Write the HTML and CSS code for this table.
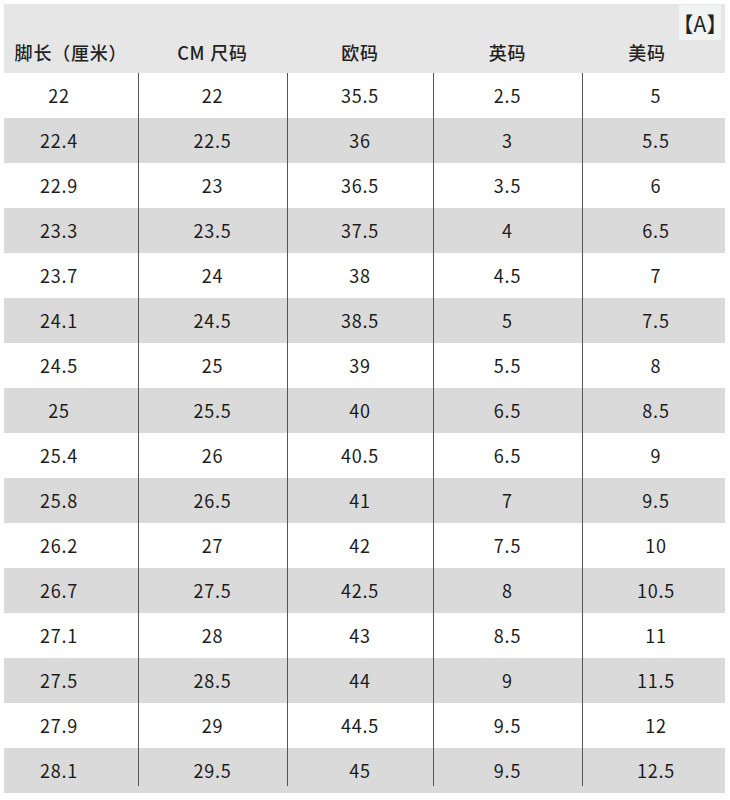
FILE: index.html
```html
<!DOCTYPE html>
<html lang="zh">
<head>
<meta charset="utf-8">
<title>尺码表</title>
<link rel="stylesheet" href="styles.css">
</head>
<body>
<div class="sheet">
  <span class="badge"><span class="badge-text">【A】</span></span>
  <table class="size-table">
    <colgroup>
      <col class="c1"><col class="c2"><col class="c3"><col class="c4"><col class="c5">
    </colgroup>
    <thead>
      <tr><th>脚长（厘米）</th><th>CM 尺码</th><th>欧码</th><th>英码</th><th>美码</th></tr>
    </thead>
    <tbody>
      <tr><td>22</td><td>22</td><td>35.5</td><td>2.5</td><td>5</td></tr>
      <tr><td>22.4</td><td>22.5</td><td>36</td><td>3</td><td>5.5</td></tr>
      <tr><td>22.9</td><td>23</td><td>36.5</td><td>3.5</td><td>6</td></tr>
      <tr><td>23.3</td><td>23.5</td><td>37.5</td><td>4</td><td>6.5</td></tr>
      <tr><td>23.7</td><td>24</td><td>38</td><td>4.5</td><td>7</td></tr>
      <tr><td>24.1</td><td>24.5</td><td>38.5</td><td>5</td><td>7.5</td></tr>
      <tr><td>24.5</td><td>25</td><td>39</td><td>5.5</td><td>8</td></tr>
      <tr><td>25</td><td>25.5</td><td>40</td><td>6.5</td><td>8.5</td></tr>
      <tr><td>25.4</td><td>26</td><td>40.5</td><td>6.5</td><td>9</td></tr>
      <tr><td>25.8</td><td>26.5</td><td>41</td><td>7</td><td>9.5</td></tr>
      <tr><td>26.2</td><td>27</td><td>42</td><td>7.5</td><td>10</td></tr>
      <tr><td>26.7</td><td>27.5</td><td>42.5</td><td>8</td><td>10.5</td></tr>
      <tr><td>27.1</td><td>28</td><td>43</td><td>8.5</td><td>11</td></tr>
      <tr><td>27.5</td><td>28.5</td><td>44</td><td>9</td><td>11.5</td></tr>
      <tr><td>27.9</td><td>29</td><td>44.5</td><td>9.5</td><td>12</td></tr>
      <tr><td>28.1</td><td>29.5</td><td>45</td><td>9.5</td><td>12.5</td></tr>
    </tbody>
  </table>
</div>
</body>
</html>
```

FILE: styles.css
```css
html, body {
  margin: 0;
  padding: 0;
  background: #ffffff;
}

body {
  font-family: "Noto Sans CJK SC", "Noto Sans", sans-serif;
  color: #1c1c1c;
}

.sheet {
  position: relative;
  width: 721px;
  margin: 4px 0 0 4px;
}

.badge {
  position: absolute;
  top: 1px;
  right: 4px;
  width: 42px;
  height: 35px;
  display: flex;
  justify-content: center;
  align-items: center;
  background: #f1f4f2;
}

.badge-text {
  flex: none;
  font-size: 21px;
  line-height: 30px;
  color: #1c2624;
  white-space: nowrap;
}

.size-table {
  width: 721px;
  border-collapse: collapse;
  border-spacing: 0;
  table-layout: fixed;
  font-size: 18px;
  letter-spacing: 0.8px;
}

.c1 { width: 134px; }
.c2 { width: 149px; }
.c3 { width: 146px; }
.c4 { width: 149px; }
.c5 { width: 143px; }

.size-table thead tr {
  background: #e6e6e6;
}

.size-table th {
  height: 69px;
  padding: 0 0 7px;
  box-sizing: border-box;
  vertical-align: bottom;
  line-height: 27px;
  font-weight: 500;
  text-align: center;
  color: #222222;
}

.size-table th:first-child {
  padding-right: 0;
}

.size-table th:last-child {
  padding-right: 13px;
}

.size-table tbody tr {
  height: 45px;
}

.size-table tbody tr:nth-child(even) {
  background: #dadada;
}

.size-table td {
  padding: 0;
  height: 45px;
  line-height: 45px;
  text-align: center;
  vertical-align: middle;
}

.size-table td:first-child {
  padding-right: 24px;
}

.size-table td:last-child {
  padding-left: 5px;
}

.size-table td + td {
  background-image: linear-gradient(#555555, #555555);
  background-repeat: no-repeat;
  background-position: left top;
  background-size: 1px 100%;
}

.size-table tbody tr:last-child td + td {
  background-size: 1px calc(100% - 7px);
}
```
